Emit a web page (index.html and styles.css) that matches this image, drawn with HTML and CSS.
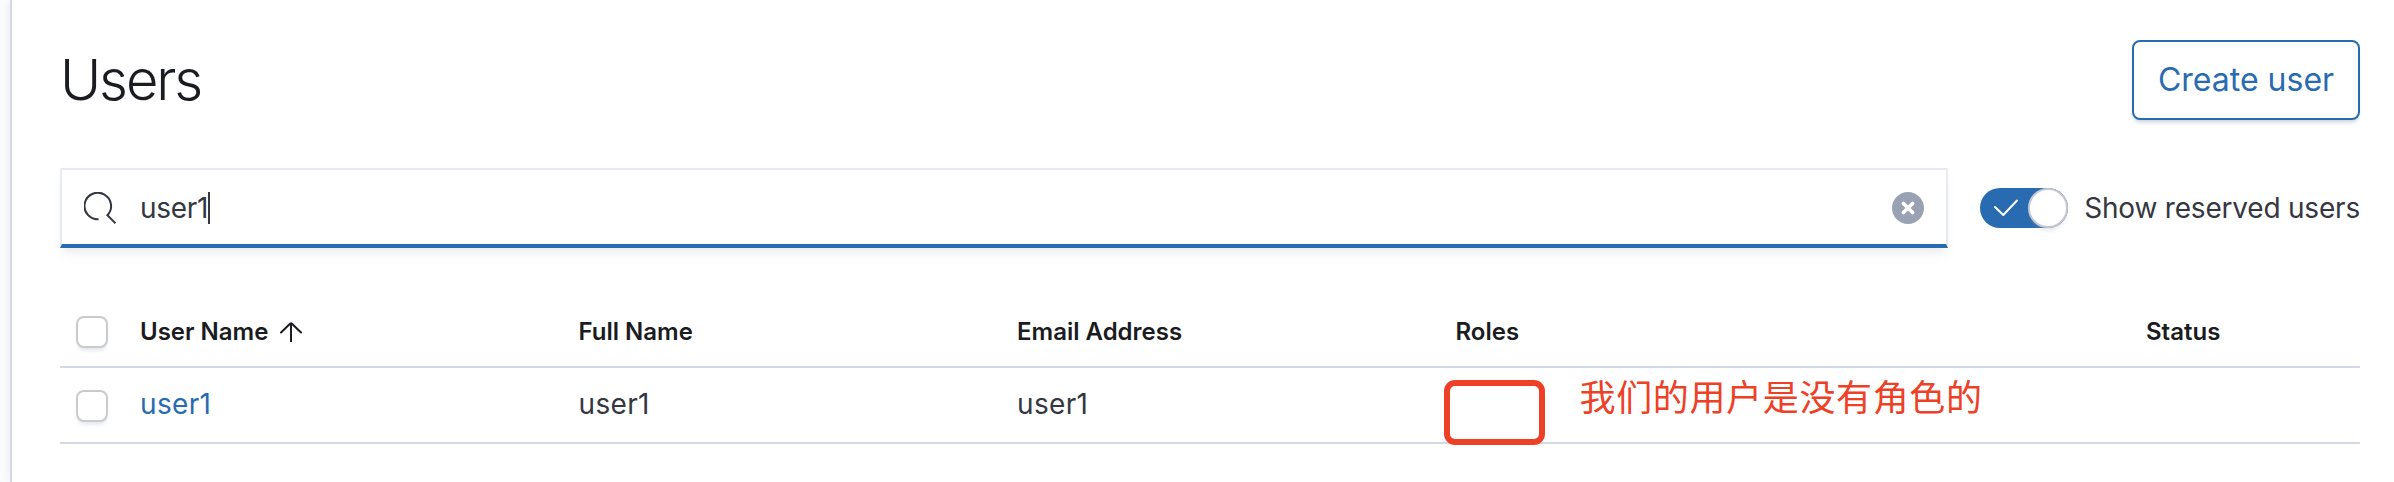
FILE: index.html
```html
<!DOCTYPE html>
<html lang="en">
<head>
<meta charset="utf-8">
<title>Users</title>
<link rel="stylesheet" href="styles.css">
</head>
<body>
<div class="app">
  <main class="panel">
    <header class="page-header">
      <h1 class="title">Users</h1>
      <button class="create-button" type="button">Create user</button>
    </header>
    <div class="toolbar">
      <div class="search">
        <svg class="search-icon" viewBox="0 0 32 32"><path d="M14.6 27.3A13.3 13.3 0 1 1 23.4 23.2L31.5 31.3" fill="none" stroke="#343741" stroke-width="2"/></svg>
        <span class="search-text">user1</span><span class="caret"></span>
        <svg class="clear" viewBox="0 0 32 32"><circle cx="16" cy="16" r="16" fill="#98a2b3"/><path d="M11.4 11.4l9.2 9.2M20.6 11.4l-9.2 9.2" stroke="#fff" stroke-width="3.6" stroke-linecap="round"/></svg>
      </div>
      <div class="switch-field">
        <span class="switch"><svg class="check" viewBox="0 0 24 18"><path d="M1 8l8.3 8L23 1.5" fill="none" stroke="#fff" stroke-width="2" stroke-linecap="round" stroke-linejoin="round"/></svg><span class="thumb"></span></span>
        <span class="switch-label">Show reserved users</span>
      </div>
    </div>
    <div class="table">
      <div class="row head">
        <span class="select"><span class="checkbox"></span></span>
        <span class="cell"><span>User Name</span><svg class="sort" viewBox="0 0 22 20"><path d="M11 20V1.2M1 10.5L10.3 1.5Q11 .8 11.7 1.5L21 10.5" fill="none" stroke="#1a1c21" stroke-width="2" stroke-linecap="round"/></svg></span>
        <span class="cell">Full Name</span>
        <span class="cell">Email Address</span>
        <span class="cell">Roles</span>
        <span class="cell">Status</span>
      </div>
      <div class="row body-row">
        <span class="select"><span class="checkbox"></span></span>
        <a class="cell link">user1</a>
        <span class="cell">user1</span>
        <span class="cell">user1</span>
        <span class="cell roles"><span class="highlight"></span><span class="note" lang="zh">我们的用户是没有角色的</span></span>
        <span class="cell"></span>
      </div>
    </div>
  </main>
</div>
</body>
</html>
```
FILE: styles.css
```css
* { box-sizing: border-box; }
body { margin: 0; background: #fafbfd; color: #343741; font-family: Inter, "Noto Sans CJK SC", sans-serif; }
.app { height: 482px; padding-left: 10px; overflow: hidden; }
.panel { height: 482px; padding: 40px 34px 0 48px; background: #fff; border-left: 2px solid #d3dae6; box-shadow: 0 0 8px rgba(152, 162, 179, .2); }
.page-header { display: flex; align-items: flex-start; justify-content: space-between; height: 80px; }
.title { margin: 0; font-size: 56px; font-weight: 340; line-height: 80px; letter-spacing: -2.1px; color: #1a1c21; }
.create-button { width: 228px; height: 80px; padding: 0; border: 2px solid #296bb0; border-radius: 8px; background: #fff; color: #296bb0; font: 400 32px/76px Inter, sans-serif; box-shadow: 0 4px 4px -2px rgba(54, 97, 126, .3); }
.toolbar { display: flex; align-items: center; justify-content: space-between; margin-top: 48px; height: 80px; }
.search { display: flex; align-items: center; width: 1888px; height: 80px; padding: 0 22px; border: 2px solid #e6eaf0; border-bottom: 4px solid #296bb0; box-shadow: 0 8px 10px -4px rgba(152, 162, 179, .25); }
.search-icon { width: 32px; height: 32px; margin: 1px 24px 0 0; }
.search-text { margin-top: 2px; font-size: 28px; line-height: 40px; letter-spacing: -.3px; }
.caret { width: 2px; height: 32px; margin-top: 1px; background: #343741; }
.clear { width: 32px; height: 32px; margin: 1px 0 0 auto; }
.switch-field { display: flex; align-items: center; justify-content: space-between; width: 380px; }
.switch { display: flex; flex: none; align-items: center; justify-content: space-between; width: 88px; height: 40px; padding-left: 14px; border-radius: 20px; background: #296bb0; }
.check { width: 24px; height: 18px; }
.thumb { width: 40px; height: 40px; border: 2px solid #c5c8cc; border-radius: 50%; background: #fff; box-shadow: 0 4px 4px -2px rgba(152, 162, 179, .3); }
.switch-label { font-size: 28px; line-height: 40px; letter-spacing: -.2px; white-space: nowrap; }
.table { margin-top: 48px; }
.row { display: grid; grid-template-columns: 64px 438.5px 438.5px 438.5px 690.5px 230px; align-items: center; border-bottom: 2px solid #d3dae6; }
.head { height: 72px; padding-top: 2px; font-size: 24px; font-weight: 600; color: #1a1c21; }
.body-row { height: 76px; font-size: 28px; letter-spacing: .35px; }
.select { display: flex; padding-left: 16px; }
.checkbox { width: 32px; height: 32px; border: 2px solid #c9cbcd; border-radius: 8px; background: #fff; box-shadow: 0 4px 4px -2px rgba(152, 162, 179, .3); }
.body-row .checkbox { margin-top: 2px; }
.cell { display: flex; align-items: center; padding-left: 16px; line-height: 36px; }
.body-row .cell { padding-bottom: 2px; }
.link { color: #296bb0; }
.sort { width: 22px; height: 20px; margin-left: 12px; }
.roles { position: relative; height: 74px; }
.highlight { position: absolute; left: 4px; top: 12px; width: 101px; height: 65px; border: 6px solid #ee4026; border-radius: 11px; }
.note { position: absolute; left: 140px; top: 0; font: 400 36px/54px "Noto Sans CJK SC", sans-serif; letter-spacing: .65px; color: #ee4026; white-space: nowrap; }
```
